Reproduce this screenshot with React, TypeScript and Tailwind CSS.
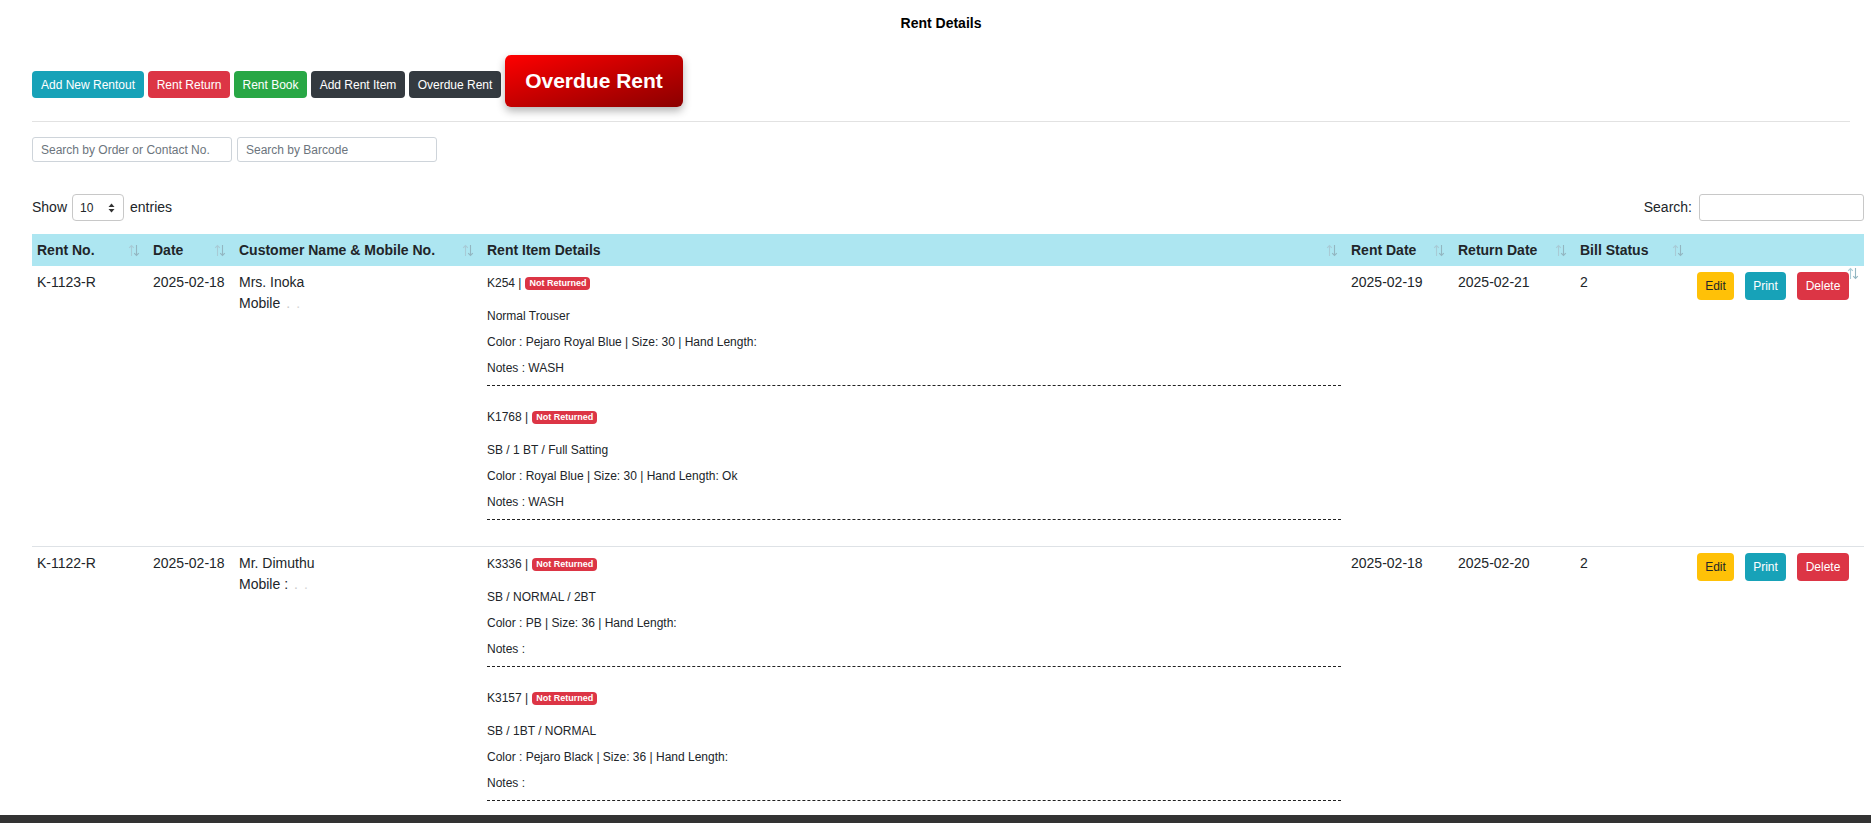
import React from "react";

const SortIcon = () => (
  <svg width="12" height="13" viewBox="0 0 12 13" fill="none" className="shrink-0">
    <path d="M3.5 12V1.5M1.2 3.8L3.5 1.5L5.8 3.8" stroke="#a8cbd6" strokeWidth="1.1" />
    <path d="M8.5 1v10.5M6.2 9.2l2.3 2.3 2.3-2.3" stroke="#93b6c1" strokeWidth="1.1" />
  </svg>
);

type Item = { code: string; name: string; color: string; size: string; hand: string; notes: string };
type Row = {
  no: string;
  date: string;
  cust: string;
  mobile: string;
  items: Item[];
  rentDate: string;
  returnDate: string;
  bill: string;
};

const rows: Row[] = [
  {
    no: "K-1123-R",
    date: "2025-02-18",
    cust: "Mrs. Inoka",
    mobile: "Mobile",
    items: [
      { code: "K254", name: "Normal Trouser", color: "Pejaro Royal Blue", size: "30", hand: "", notes: "WASH" },
      { code: "K1768", name: "SB / 1 BT / Full Satting", color: "Royal Blue", size: "30", hand: " Ok", notes: "WASH" },
    ],
    rentDate: "2025-02-19",
    returnDate: "2025-02-21",
    bill: "2",
  },
  {
    no: "K-1122-R",
    date: "2025-02-18",
    cust: "Mr. Dimuthu",
    mobile: "Mobile :",
    items: [
      { code: "K3336", name: "SB / NORMAL / 2BT", color: "PB", size: "36", hand: "", notes: "" },
      { code: "K3157", name: "SB / 1BT / NORMAL", color: "Pejaro Black", size: "36", hand: "", notes: "" },
    ],
    rentDate: "2025-02-18",
    returnDate: "2025-02-20",
    bill: "2",
  },
];

const headers = [
  "Rent No.",
  "Date",
  "Customer Name & Mobile No.",
  "Rent Item Details",
  "Rent Date",
  "Return Date",
  "Bill Status",
];

export default function App() {
  return (
    <div className="h-[823px] overflow-hidden bg-white font-['Liberation_Sans',Arial,sans-serif] text-[#212529]">
      <div className="pl-[32px] pr-[7px]">
        <div className="pr-[14px] pt-[14px] text-center text-[14px] font-bold leading-[18px] text-black">Rent Details</div>

        <div className="mt-[23px] flex items-start gap-[4px]">
          <button className="mt-[16px] h-[27px] w-[112px] rounded-[4px] bg-[#17a2b8] text-[12px] text-white">Add New Rentout</button>
          <button className="mt-[16px] h-[27px] w-[82px] rounded-[4px] bg-[#dc3545] text-[12px] text-white">Rent Return</button>
          <button className="mt-[16px] h-[27px] w-[73px] rounded-[4px] bg-[#28a745] text-[12px] text-white">Rent Book</button>
          <button className="mt-[16px] h-[27px] w-[94px] rounded-[4px] bg-[#343a40] text-[12px] text-white">Add Rent Item</button>
          <button className="mt-[16px] h-[27px] w-[92px] rounded-[4px] bg-[#343a40] text-[12px] text-white">Overdue Rent</button>
          <button className="h-[52px] w-[178px] rounded-[6px] bg-linear-to-br from-[#ff0000] to-[#8b0000] text-[21px] font-bold text-white shadow-[0_4px_8px_rgba(0,0,0,0.3)]">
            Overdue Rent
          </button>
        </div>

        <div className="mr-[14px] mt-[14px] h-px bg-[#e2e2e2]" />

        <div className="mt-[15px] flex gap-[5px]">
          <input
            className="h-[25px] w-[200px] rounded-[3px] border border-[#ced4da] px-[8px] text-[12px] outline-none placeholder:text-[#6c757d]"
            placeholder="Search by Order or Contact No."
          />
          <input
            className="h-[25px] w-[200px] rounded-[3px] border border-[#ced4da] px-[8px] text-[12px] outline-none placeholder:text-[#6c757d]"
            placeholder="Search by Barcode"
          />
        </div>

        <div className="mt-[32px] flex items-center justify-between text-[14px]">
          <div className="flex items-center">
            <span>Show</span>
            <div className="ml-[5px] flex h-[27px] w-[52px] items-center justify-between rounded-[4px] border border-[#c8c8c8] pl-[7px] pr-[8px] text-[12px]">
              <span>10</span>
              <svg width="7" height="10" viewBox="0 0 7 10">
                <path d="M3.5 0.5L6.5 4H0.5z" fill="#333" />
                <path d="M3.5 9.5L6.5 6H0.5z" fill="#333" />
              </svg>
            </div>
            <span className="ml-[6px]">entries</span>
          </div>
          <div className="flex items-center">
            <span>Search:</span>
            <input className="ml-[7px] h-[27px] w-[165px] rounded-[3px] border border-[#c8c8c8] outline-none" />
          </div>
        </div>

        <table className="mt-[13px] w-[1832px] table-fixed border-collapse text-[14px]">
          <colgroup>
            <col className="w-[116px]" />
            <col className="w-[86px]" />
            <col className="w-[248px]" />
            <col className="w-[864px]" />
            <col className="w-[107px]" />
            <col className="w-[122px]" />
            <col className="w-[117px]" />
            <col className="w-[172px]" />
          </colgroup>
          <thead>
            <tr className="bg-[#ade6f1]">
              {headers.map((h) => (
                <th key={h} className="h-[32px] pl-[5px] pr-[8px] text-left font-bold">
                  <div className="flex items-center justify-between">
                    <span>{h}</span>
                    <SortIcon />
                  </div>
                </th>
              ))}
              <th className="relative h-[32px]">
                <div className="absolute right-[5px] top-[33px]">
                  <SortIcon />
                </div>
              </th>
            </tr>
          </thead>
          <tbody>
            {rows.map((r, ri) => (
              <tr key={r.no} className={ri > 0 ? "border-t border-[#dee2e6]" : ""}>
                <td className="px-[5px] pt-[6px] align-top leading-[21px]">{r.no}</td>
                <td className="px-[5px] pt-[6px] align-top leading-[21px]">{r.date}</td>
                <td className="px-[5px] pt-[6px] align-top leading-[21px]">
                  <div>{r.cust}</div>
                  <div>
                    {r.mobile}
                    <span className="ml-[6px] text-[#c9c9c9]">.</span>
                    <span className="ml-[6px] text-[#d5d5d5]">.</span>
                  </div>
                </td>
                <td className="px-[5px] pb-[4px] pt-[8px] align-top">
                  {r.items.map((it) => (
                    <div key={it.code} className="mb-[22px] border-b border-dashed border-[#222] text-[12px] leading-[18px]">
                      <div className="mb-[15px] flex items-center">
                        <span>{it.code} |</span>
                        <span className="ml-[4px] rounded-[4px] bg-[#dc3545] px-[4px] text-[9px] font-bold leading-[13px] text-white">
                          Not Returned
                        </span>
                      </div>
                      <div className="mb-[8px]">{it.name}</div>
                      <div className="mb-[8px]">
                        Color : {it.color} | Size: {it.size} | Hand Length:{it.hand}
                      </div>
                      <div className="mb-[8px]">Notes : {it.notes}</div>
                    </div>
                  ))}
                </td>
                <td className="px-[5px] pt-[6px] align-top leading-[21px]">{r.rentDate}</td>
                <td className="px-[5px] pt-[6px] align-top leading-[21px]">{r.returnDate}</td>
                <td className="px-[5px] pt-[6px] align-top leading-[21px]">{r.bill}</td>
                <td className="px-[5px] pt-[6px] align-top">
                  <div className="flex gap-[11px]">
                    <button className="h-[28px] w-[37px] rounded-[4px] bg-[#ffc107] text-[12px] text-[#212529]">Edit</button>
                    <button className="h-[28px] w-[41px] rounded-[4px] bg-[#17a2b8] text-[12px] text-white">Print</button>
                    <button className="h-[28px] w-[52px] rounded-[4px] bg-[#dc3545] text-[12px] text-white">Delete</button>
                  </div>
                </td>
              </tr>
            ))}
          </tbody>
        </table>
      </div>
      <div className="fixed bottom-0 left-0 right-0 h-[8px] bg-[#333333]" />
    </div>
  );
}
